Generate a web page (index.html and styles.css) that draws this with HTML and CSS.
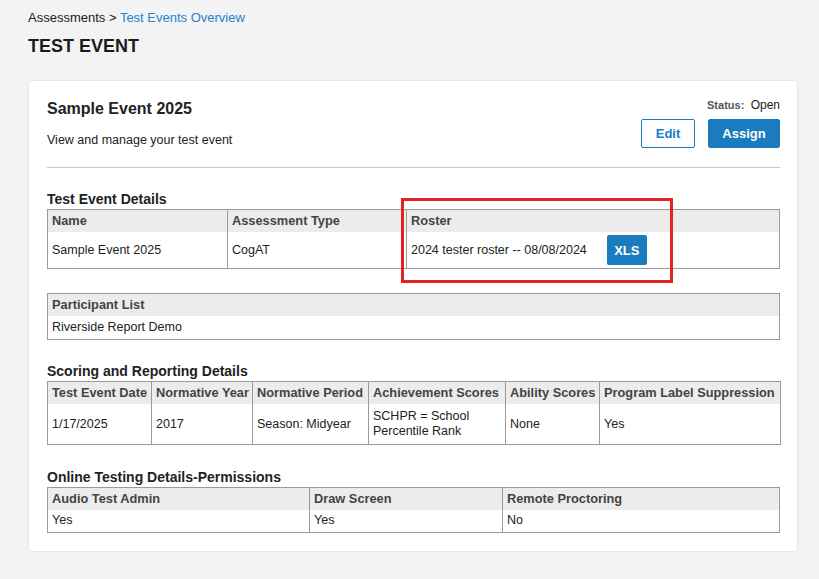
FILE: index.html
```html
<!DOCTYPE html>
<html>
<head>
<meta charset="utf-8">
<link rel="stylesheet" href="styles.css">
</head>
<body>
<div class="page">
  <div class="breadcrumb">Assessments &gt; <a class="crumb-link" href="#">Test Events Overview</a></div>
  <h1 class="page-title">TEST EVENT</h1>
  <div class="card">
    <div class="card-head">
      <div class="head-left">
        <h2 class="event-name">Sample Event 2025</h2>
        <p class="event-sub">View and manage your test event</p>
      </div>
      <div class="head-right">
        <div class="status"><span class="status-label">Status:</span> <span class="status-value">Open</span></div>
        <div class="actions">
          <button class="btn btn-outline">Edit</button>
          <button class="btn btn-solid">Assign</button>
        </div>
      </div>
    </div>
    <hr class="divider">

    <section class="section section-first">
      <h3 class="section-title">Test Event Details</h3>
      <div class="table-wrap">
        <table class="grid">
          <tr>
            <th class="c-name">Name</th>
            <th class="c-type">Assessment Type</th>
            <th>Roster</th>
          </tr>
          <tr class="tall">
            <td>Sample Event 2025</td>
            <td>CogAT</td>
            <td><span class="roster-text">2024 tester roster -- 08/08/2024</span><button class="btn-xls">XLS</button></td>
          </tr>
        </table>
        <div class="highlight"></div>
      </div>
    </section>

    <section class="section">
      <table class="grid">
        <tr><th>Participant List</th></tr>
        <tr><td>Riverside Report Demo</td></tr>
      </table>
    </section>

    <section class="section section-scoring">
      <h3 class="section-title">Scoring and Reporting Details</h3>
      <table class="grid grid-fixed">
        <tr>
          <th class="s1">Test Event Date</th>
          <th class="s2">Normative Year</th>
          <th class="s3">Normative Period</th>
          <th class="s4">Achievement Scores</th>
          <th class="s5">Ability Scores</th>
          <th class="s6">Program Label Suppression</th>
        </tr>
        <tr class="two-line">
          <td>1/17/2025</td>
          <td>2017</td>
          <td>Season: Midyear</td>
          <td>SCHPR = School Percentile Rank</td>
          <td>None</td>
          <td>Yes</td>
        </tr>
      </table>
    </section>

    <section class="section">
      <h3 class="section-title">Online Testing Details-Permissions</h3>
      <table class="grid">
        <tr>
          <th class="o1">Audio Test Admin</th>
          <th class="o2">Draw Screen</th>
          <th>Remote Proctoring</th>
        </tr>
        <tr class="short">
          <td>Yes</td>
          <td>Yes</td>
          <td>No</td>
        </tr>
      </table>
    </section>
  </div>
</div>
</body>
</html>
```
FILE: styles.css
```css
html, body {
  margin: 0;
  padding: 0;
  background: #f3f3f3;
  font-family: "Liberation Sans", Arial, sans-serif;
  color: #222;
}
.page {
  padding: 10px 21px 28px 28px;
}
.breadcrumb {
  font-size: 13px;
  line-height: 16px;
  color: #222;
}
.crumb-link {
  color: #2a7fc9;
  text-decoration: none;
}
.page-title {
  margin: 10px 0 0 0;
  font-size: 18px;
  line-height: 20px;
  font-weight: bold;
  color: #1c1c1c;
}
.card {
  margin-top: 24px;
  background: #fff;
  border: 1px solid #e6e6e6;
  border-radius: 4px;
  padding: 18px 17px 18px 18px;
}
.card-head {
  display: flex;
  justify-content: space-between;
  align-items: flex-start;
}
.event-name {
  margin: 0;
  font-size: 16px;
  line-height: 19px;
  font-weight: bold;
  color: #222;
}
.event-sub {
  margin: 15px 0 0 0;
  font-size: 12.5px;
  line-height: 14px;
  color: #222;
}
.head-right {
  display: flex;
  flex-direction: column;
  align-items: flex-end;
}
.status {
  font-size: 12px;
  line-height: 14px;
  margin-top: -1px;
}
.status-label {
  font-size: 11px;
  font-weight: bold;
  color: #555;
  margin-right: 3px;
}
.status-value {
  color: #222;
}
.actions {
  display: flex;
  gap: 13px;
  margin-top: 7px;
}
.btn {
  font-family: "Liberation Sans", Arial, sans-serif;
  font-size: 13px;
  font-weight: bold;
  height: 29px;
  border-radius: 2px;
  cursor: pointer;
}
.btn-outline {
  width: 54px;
  background: #fff;
  color: #1a7bbf;
  border: 1px solid #1a7bbf;
}
.btn-solid {
  width: 72px;
  background: #1a7bbf;
  color: #fff;
  border: 1px solid #1a7bbf;
}
.divider {
  margin: 19px 0 0 0;
  border: 0;
  border-top: 1px solid #c8c8c8;
}
.section {
  margin-top: 24px;
}
.section-first {
  margin-top: 23px;
}
.section-scoring {
  margin-top: 23px;
}
.section-title {
  margin: 0 0 1px 0;
  font-size: 14px;
  line-height: 17px;
  font-weight: bold;
  color: #222;
}
.table-wrap {
  position: relative;
}
.grid {
  width: 100%;
  border-collapse: collapse;
  border: 1px solid #9a9a9a;
  font-size: 12.5px;
}
.grid-fixed {
  table-layout: fixed;
}
.grid th {
  background: #ececec;
  color: #444;
  font-weight: bold;
  font-size: 12.8px;
  text-align: left;
  padding: 3px 4px;
  line-height: 16px;
  border-left: 1px solid #9a9a9a;
  white-space: nowrap;
  overflow: hidden;
}
.grid td {
  padding: 4px 4px;
  line-height: 15px;
  color: #222;
  border-left: 1px solid #9a9a9a;
  vertical-align: middle;
}
.grid .tall td {
  padding: 3px 4px;
}
.grid .two-line td {
  padding: 5px 4px;
}
.grid .short td {
  padding: 3px 4px 4px 4px;
}
.c-name { width: 171px; }
.c-type { width: 170px; }
.s1, .s2, .s3, .s4, .s5, .s6 { box-sizing: border-box; }
.s1 { width: 104px; }
.s2 { width: 101px; }
.s3 { width: 116px; }
.s4 { width: 137px; }
.s5 { width: 94px; }
.s6 { width: 181px; }
.o1 { width: 253px; }
.o2 { width: 184px; }
.roster-text {
  display: inline-block;
  vertical-align: middle;
}
.btn-xls {
  display: inline-block;
  vertical-align: middle;
  margin-left: 20px;
  width: 40px;
  height: 30px;
  background: #1a7bbf;
  color: #fff;
  border: 0;
  border-radius: 2px;
  font-family: "Liberation Sans", Arial, sans-serif;
  font-size: 13px;
  font-weight: bold;
}
.highlight {
  position: absolute;
  left: 354px;
  top: -11px;
  width: 266px;
  height: 79px;
  border: 3px solid #e32222;
  pointer-events: none;
}
```
